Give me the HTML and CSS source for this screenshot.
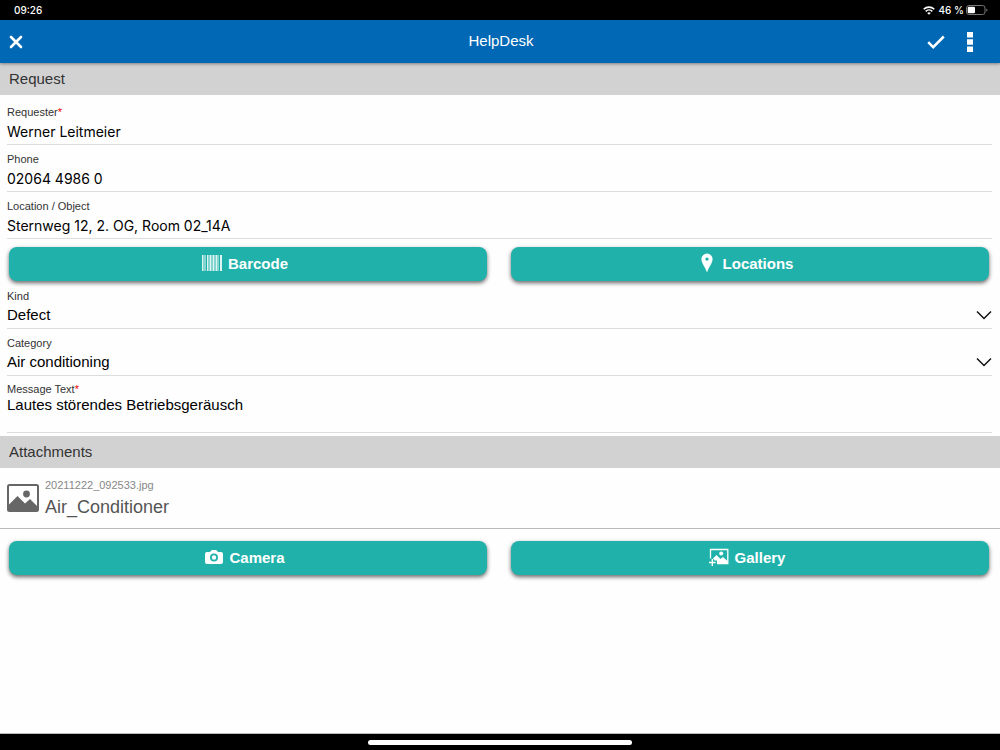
FILE: index.html
```html
<!doctype html>
<html lang="en">
<head>
<meta charset="utf-8">
<meta name="viewport" content="width=device-width, initial-scale=1">
<title>HelpDesk</title>
<link rel="stylesheet" href="styles.css">
</head>
<body>
<div class="status">
    <span class="status__time">09:26</span>
    <svg class="status__wifi" viewBox="0 0 12 9" width="12" height="9" fill="none" stroke="#fff" stroke-width="1.6">
        <path d="M.7 3.3a7.6 7.6 0 0 1 10.6 0M2.7 5.4a4.7 4.7 0 0 1 6.6 0"/>
        <path d="M6 8.8 4.2 7a2.6 2.6 0 0 1 3.6 0z" fill="#fff" stroke="none"/>
    </svg>
    <span>46 %</span>
    <svg class="status__battery" viewBox="0 0 22 10" width="22" height="10">
        <rect x=".5" y=".5" width="18.5" height="9" rx="2.5" fill="none" stroke="#777"/>
        <rect x="1.7" y="1.7" width="7.3" height="6.6" rx="1.2" fill="#fff"/>
        <path d="M20.3 3.4q1.2.5 1.2 1.6t-1.2 1.6z" fill="#777"/>
    </svg>
</div>
<header class="header">
    <button class="header__button" type="button" aria-label="Close">
        <svg viewBox="0 0 14 14" width="14" height="14"><path d="M2 2l10 10M12 2L2 12" stroke="#fff" stroke-width="2.6" stroke-linecap="round"/></svg>
    </button>
    <h1 class="header__title">HelpDesk</h1>
    <div class="header__actions">
        <button class="header__button" type="button" aria-label="Save">
            <svg viewBox="0 0 18 14" width="18" height="14" fill="none"><path d="M1.2 7.2l5 5L16.8 1.5" stroke="#fff" stroke-width="2.5"/></svg>
        </button>
        <button class="header__button" type="button" aria-label="Menu">
            <svg viewBox="0 0 6 20" width="6" height="20" fill="#fff"><path d="M0 0h6v5.5H0zM0 7.2h6v5.5H0zM0 14.4h6V20H0z"/></svg>
        </button>
    </div>
</header>
<main class="main">
    <form class="form">
        <h2 class="section">Request</h2>
        <div class="fields fields--first">
            <div class="field">
                <label class="field__label" for="requester">Requester<span class="field__required">*</span></label>
                <input class="field__input" id="requester" type="text" value="Werner Leitmeier">
            </div>
            <div class="field">
                <label class="field__label" for="phone">Phone</label>
                <input class="field__input" id="phone" type="tel" value="02064 4986 0">
            </div>
            <div class="field">
                <label class="field__label" for="location">Location / Object</label>
                <input class="field__input" id="location" type="text" value="Sternweg 12, 2. OG, Room 02_14A">
            </div>
        </div>
        <div class="buttons">
            <button class="button" type="button">
                <svg viewBox="0 0 20 16" width="20" height="16" fill="#fff">
                    <path d="M0 0h1v16H0zM5 0h1v16H5zM8 0h1v16H8zM11 0h1v16h-1zM14 0h1v16h-1zM18 0h2v16h-2z" opacity=".85"/>
                    <path d="M1 0h3v16H1zM6 0h2v16H6zM9 0h2v16H9zM12 0h2v16h-2zM15 0h2v16h-2z" opacity=".45"/>
                </svg>
                Barcode
            </button>
            <button class="button button--wide" type="button">
                <svg viewBox="0 0 12 20" width="12" height="20"><path fill="#fff" fill-rule="evenodd" d="M6 .5a5.6 5.6 0 0 1 5.6 5.6C11.6 10 8.5 13 6 19.5 3.5 13 .4 10 .4 6.1A5.6 5.6 0 0 1 6 .5zM6 4.4a1.700 1.700 0 1 0 0 3.400 1.700 1.700 0 0 0 0-3.400z"/></svg>
                Locations
            </button>
        </div>
        <div class="fields">
            <div class="field">
                <label class="field__label" for="kind">Kind</label>
                <select class="field__input field__input--select" id="kind"><option>Defect</option></select>
                <svg class="field__arrow" viewBox="0 0 16 10" width="16" height="10" fill="none"><path d="M1 1.5l7 7 7-7" stroke="#111" stroke-width="1.5"/></svg>
            </div>
            <div class="field">
                <label class="field__label" for="category">Category</label>
                <select class="field__input field__input--select" id="category"><option>Air conditioning</option></select>
                <svg class="field__arrow" viewBox="0 0 16 10" width="16" height="10" fill="none"><path d="M1 1.5l7 7 7-7" stroke="#111" stroke-width="1.5"/></svg>
            </div>
            <div class="field field--message">
                <label class="field__label" for="message">Message Text<span class="field__required">*</span></label>
                <textarea class="field__input field__input--area" id="message">Lautes störendes Betriebsgeräusch</textarea>
            </div>
        </div>
        <h2 class="section">Attachments</h2>
        <div class="attachment">
            <svg viewBox="0 0 32 28" width="32" height="28">
                <rect x="1" y="1" width="30" height="26" rx="1.5" fill="none" stroke="#666" stroke-width="2"/>
                <path d="M2 20.500L10.500 12l7.500 7.500 5-4.500 7 7v4.500H2z" fill="#666"/>
                <circle cx="19.500" cy="10" r="3.400" fill="#666"/>
            </svg>
            <div>
                <div class="attachment__file">20211222_092533.jpg</div>
                <div class="attachment__name">Air_Conditioner</div>
            </div>
        </div>
        <div class="buttons buttons--attachments">
            <button class="button" type="button">
                <svg viewBox="0 0 18 14" width="18" height="14"><path fill="#fff" fill-rule="evenodd" d="M2 2h3l1.300-1.500Q6.700 0 7.500 0h3q.8 0 1.200.5L13 2h3q2 0 2 2v8q0 2-2 2H2q-2 0-2-2V4q0-2 2-2zM9 3.500a4 4 0 1 0 0 8 4 4 0 0 0 0-8zM9 5.300a2.200 2.200 0 1 1 0 4.400 2.200 2.200 0 0 1 0-4.400z"/></svg>
                Camera
            </button>
            <button class="button" type="button">
                <svg viewBox="0 0 20 18" width="20" height="18">
                    <path d="M1.500 10.500V1.500h17.300v14H8" fill="none" stroke="#fff" stroke-width="1.300"/>
                    <path d="M4 10.500L7.500 7l4 4 2.500-2 4.500 4v2.500H8V12.500H5.500z" fill="#fff"/>
                    <circle cx="12.200" cy="5.600" r="2" fill="#fff"/>
                    <path d="M3.300 11v7M0 14.500h6.600" stroke="#fff" stroke-width="1.400"/>
                </svg>
                Gallery
            </button>
        </div>
    </form>
</main>
<footer class="home"><div class="home__bar"></div></footer>
</body>
</html>
```
FILE: styles.css
```css
* {
    box-sizing: border-box;
}
body {
    font-family: "Liberation Sans", Arial, sans-serif;
    display: flex;
    flex-direction: column;
    min-height: 100vh;
    margin: 0;
    background-color: #fefefe;
    color: #333;
}
button, input, select, textarea {
    font: inherit;
    color: inherit;
    margin: 0;
    padding: 0;
    border: 0;
    background: none;
}
svg {
    display: block;
    flex: none;
}
.status {
    display: flex;
    align-items: center;
    height: 20px;
    padding: 0 12px 0 14px;
    background-color: black;
    color: white;
    font-family: Inter, sans-serif;
    font-size: 10px;
    font-weight: 500;
}
.status__time {
    margin-right: auto;
}
.status__wifi {
    margin-right: 4px;
}
.status__battery {
    margin-left: 2px;
}
.header {
    display: grid;
    grid-template-columns: 1fr auto 1fr;
    align-items: center;
    height: 43px;
    padding: 0 27px 0 9px;
    background-color: #0068b4;
    color: white;
    box-shadow: 0 1px 3px rgba(0, 0, 0, 0.4);
    position: relative;
}
.header__title {
    margin: 0 0 2px 20px;
    font-size: 15px;
    font-weight: normal;
}
.header__actions {
    display: flex;
    justify-content: flex-end;
    align-items: center;
    gap: 22px;
}
.header__button {
    cursor: pointer;
}
.main {
    flex: 1;
    border-bottom: 1px solid #bbb;
}
.section {
    margin: 0;
    padding: 0 9px;
    background-color: #d2d2d2;
    font-size: 15px;
    font-weight: normal;
    line-height: 32px;
}
.fields {
    padding: 0 8px 3px 7px;
}
.fields--first {
    padding: 3px 8px 0 7px;
}
.field {
    position: relative;
    padding-top: 7px;
    border-bottom: 1px solid #ddd;
}
.field--message {
    padding-top: 6px;
}
.field__label {
    display: block;
    font-size: 11px;
    line-height: 14px;
}
.field__required {
    color: #e00;
}
.field__input {
    display: block;
    width: 100%;
    height: 25px;
    outline: none;
    color: black;
    font-family: Inter, sans-serif;
    font-size: 14px;
}
.field__input--select {
    appearance: none;
    padding-bottom: 2px;
    font-family: inherit;
    font-size: 15px;
}
.field__input--area {
    height: 36px;
    font-family: inherit;
    font-size: 15px;
    line-height: 18px;
    resize: none;
}
.field__arrow {
    position: absolute;
    right: 0;
    bottom: 8px;
    pointer-events: none;
}
.buttons {
    display: grid;
    grid-template-columns: 1fr 1fr;
    gap: 24px;
    padding: 8px 11px 1px 9px;
}
.buttons--attachments {
    padding-top: 12px;
}
.button {
    display: flex;
    align-items: center;
    justify-content: center;
    gap: 6px;
    height: 34px;
    padding: 0 6px 2px 0;
    border-radius: 8px;
    background-color: #20b2aa;
    color: white;
    font-size: 15px;
    font-weight: bold;
    box-shadow: 0 2px 4px rgba(0, 0, 0, 0.6);
    cursor: pointer;
}
.button--wide {
    gap: 10px;
}
.attachment {
    display: flex;
    align-items: center;
    gap: 6px;
    height: 61px;
    padding: 0 7px;
    border-bottom: 1px solid #bbb;
}
.attachment__file {
    padding-top: 2px;
    color: #888;
    font-size: 11px;
    line-height: 16px;
}
.attachment__name {
    color: #555;
    font-size: 18px;
    line-height: 28px;
}
.home {
    display: flex;
    align-items: center;
    justify-content: center;
    height: 16px;
    background-color: black;
}
.home__bar {
    width: 264px;
    height: 5px;
    border-radius: 3px;
    background-color: white;
}
```
